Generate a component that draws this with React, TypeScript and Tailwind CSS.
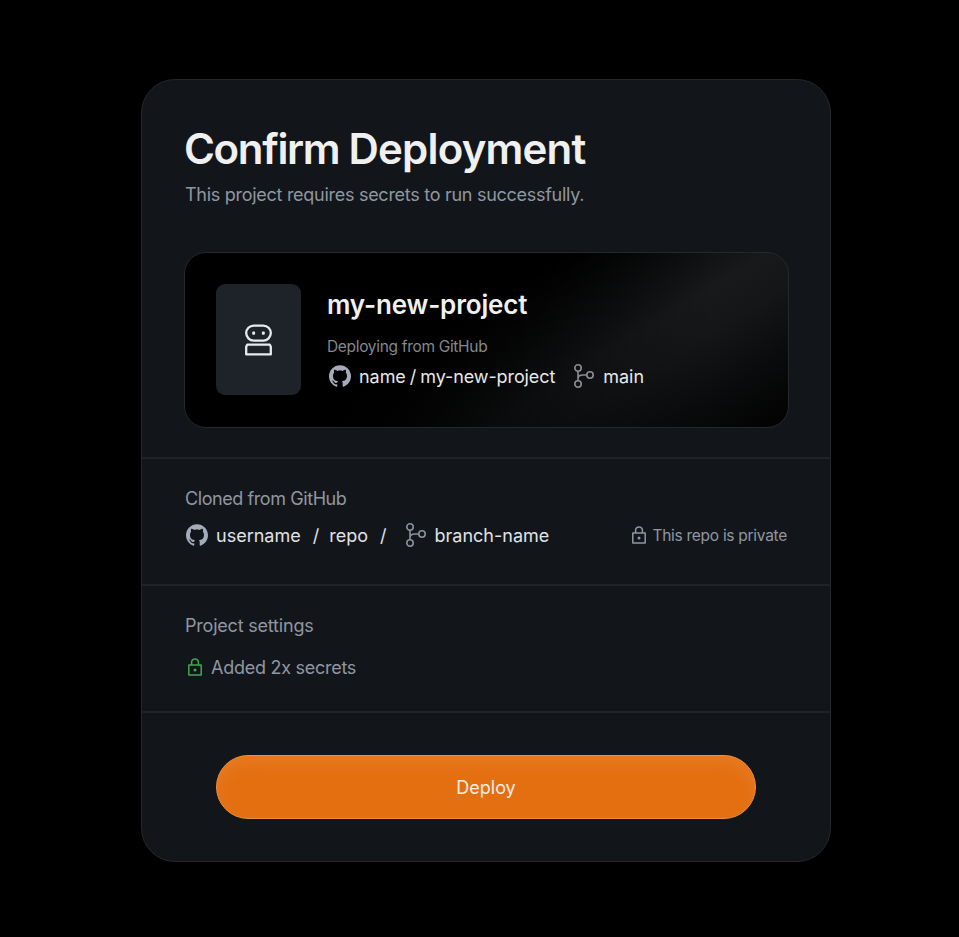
import type { ReactNode } from "react";
import { SiGithub } from "react-icons/si";

function BranchIcon({ className }: { className: string }) {
  return (
    <svg viewBox="0 0 22 26" fill="none" stroke="currentColor" strokeWidth="1.6" className={`h-[26px] w-[22px] shrink-0 ${className}`}>
      <circle cx="5" cy="5" r="3.2" />
      <circle cx="5" cy="21" r="3.2" />
      <circle cx="17" cy="12" r="3.2" />
      <path d="M5 8.2v9.6M5 15.6c0-2.4 2.2-3.6 5-3.6h3.8" />
    </svg>
  );
}

function LockIcon({ className }: { className: string }) {
  return (
    <svg viewBox="0 0 14 18" fill="none" stroke="currentColor" strokeWidth="1.5" className={`h-[18px] w-[14px] shrink-0 ${className}`}>
      <path d="M.8 7h12.4v10H.8z" strokeLinejoin="round" />
      <path d="M3.6 7V4.3a3.4 3.4 0 0 1 6.8 0V7" />
      <circle cx="7" cy="12" r="1.5" fill="currentColor" stroke="none" />
    </svg>
  );
}

function RobotIcon() {
  return (
    <svg viewBox="0 0 28 32" fill="none" stroke="#e6ebf0" strokeWidth="2.3" className="h-8 w-7">
      <rect x="1.2" y="1.6" width="24.6" height="15" rx="7.5" />
      <path d="M2.2 20.7h22.6l1 2v7.7H1.2v-7.7z" strokeLinejoin="round" />
      <rect x="7.2" y="7.6" width="2.9" height="3.1" rx="1" fill="#e6ebf0" stroke="none" />
      <rect x="16.9" y="7.6" width="2.9" height="3.1" rx="1" fill="#e6ebf0" stroke="none" />
    </svg>
  );
}

function Section({ className, children }: { className: string; children: ReactNode }) {
  return <section className={`border-t-2 border-[#1f2327] px-[42px] ${className}`}>{children}</section>;
}

export default function App() {
  return (
    <main className="h-[937px] w-[959px] overflow-hidden bg-black pt-[79px] pl-[141px] font-['Inter','Liberation_Sans',sans-serif] whitespace-nowrap">
      <div className="flex h-[783px] w-[690px] flex-col rounded-[34px] border border-[#25282b] bg-[#12161a]">
        <header className="h-[377px] px-[42px] pt-[45px]">
          <h1 className="text-[42px] leading-[48px] font-semibold tracking-[-1.35px] text-[#f0f0f1]">
            Confirm <span className="tracking-[-0.8px]">Deployment</span>
          </h1>
          <p className="mt-[10px] pl-px text-[18px] leading-6 tracking-[-0.28px] text-[#9096a1]">
            This project requires secrets to run successfully.
          </p>
          <div className="mt-[45px] h-[176px] w-[605px] rounded-[22px] border border-[#25282b] bg-[linear-gradient(90deg,#000_25%,transparent_88%),linear-gradient(148deg,#000_44%,#0c0d0e_55%,#17191b_66%,#141618_74%,#0a0b0c_86%,#030303_97%)]">
            <div className="flex p-[31px]">
              <div className="flex h-[111px] w-[85px] shrink-0 items-center justify-center rounded-[9px] bg-[#1d2329]">
                <RobotIcon />
              </div>
              <div className="ml-[26px]">
                <h2 className="mt-[6px] text-[26px] leading-[30px] font-semibold tracking-[-0.15px] text-[#f0f0f1]">my-new-project</h2>
                <p className="mt-[17px] text-[15.5px] leading-5 tracking-[-0.32px] text-[#85888d]">Deploying from GitHub</p>
                <div className="mt-[6px] flex h-[26px] items-center text-[18px] leading-[26px] text-[#e8e8e9]">
                  <SiGithub className="ml-[2px] size-[22px] text-[#a4acba]" />
                  <span className="ml-[8px] pt-[2px] tracking-[-0.05px]">name</span>
                  <span className="ml-[4px] pt-[2px]">/</span>
                  <span className="ml-[4px] pt-[2px] tracking-[-0.1px]">my-new-project</span>
                  <BranchIcon className="ml-[18px] text-[#8b8e93]" />
                  <span className="ml-[8px] pt-[2px]">main</span>
                </div>
              </div>
            </div>
          </div>
        </header>

        <Section className="h-[127px] pt-[28px]">
          <h3 className="pl-px text-[18px] leading-6 tracking-[-0.42px] text-[#9096a1]">Cloned from GitHub</h3>
          <div className="mt-[11px] flex h-[26px] items-center text-[18px] leading-[26px] text-[#e0e2e5]">
            <SiGithub className="ml-[2px] size-[22px] text-[#a4acba]" />
            <span className="ml-[8px] pt-[2px]">username</span>
            <span className="ml-[12px] pt-[2px]">/</span>
            <span className="ml-[10px] pt-[2px]">repo</span>
            <span className="ml-[12px] pt-[2px]">/</span>
            <BranchIcon className="ml-[18px] text-[#8b909a]" />
            <span className="ml-[8px] pt-[2px]">branch-name</span>
            <LockIcon className="ml-auto text-[#9096a1]" />
            <span className="mr-px ml-[6px] pt-px text-[15.5px] tracking-[-0.28px] text-[#9096a1]">This repo is private</span>
          </div>
        </Section>

        <Section className="h-[127px] pt-[28px]">
          <h3 className="pl-px text-[18px] leading-6 tracking-[-0.2px] text-[#9096a1]">Project settings</h3>
          <div className="mt-[17px] flex h-6 items-center">
            <LockIcon className="ml-[4px] text-[#43a552]" />
            <span className="ml-[9px] pt-[2px] text-[18px] leading-6 tracking-[-0.27px] text-[#9096a1]">Added 2x secrets</span>
          </div>
        </Section>

        <Section className="flex-1 pt-[42px]">
          <button className="ml-[32px] flex h-[64px] w-[540px] items-center justify-center rounded-full border border-[#ee8f3d] bg-[#e36f10] pt-[2px] text-[18px] leading-6 text-[#fbeee3] shadow-[inset_0_8px_16px_rgba(255,190,140,0.14)]">
            Deploy
          </button>
        </Section>
      </div>
    </main>
  );
}
